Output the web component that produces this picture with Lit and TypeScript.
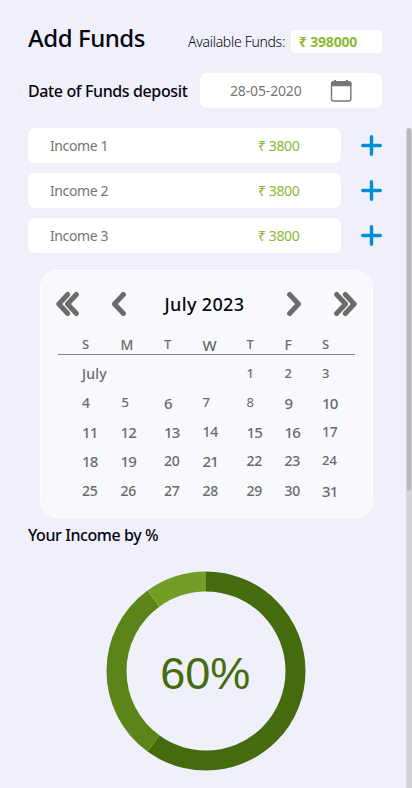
import { LitElement, html, css, svg } from "lit";
import { customElement } from "lit/decorators.js";

type Cell = [text: string, size?: string];

const WEEKDAYS: Cell[] = [["S", "s"], ["M"], ["T", "s"], ["W", "l"], ["T", "s"], ["F"], ["S", "s"]];
const WEEKS: Cell[][] = [
  [["July", "word"], [""], [""], [""], ["1", "s"], ["2", "s"], ["3", "s"]],
  [["4"], ["5", "s in"], ["6", "l"], ["7", "s"], ["8", "s thin"], ["9", "l"], ["10", "l"]],
  [["11", "l"], ["12", "l"], ["13", "l"], ["14"], ["15", "l"], ["16", "l"], ["17"]],
  [["18", "l"], ["19", "l"], ["20"], ["21", "l"], ["22"], ["23"], ["24", "s wide"]],
  [["25"], ["26"], ["27"], ["28"], ["29"], ["30"], ["31", "l"]],
];

const SHARES = [
  { value: 60, color: "#446c0e" },
  { value: 30, color: "#5b8519" },
  { value: 10, color: "#729e28" },
];

@customElement("fund-calendar")
export class FundCalendar extends LitElement {
  static styles = css`
    :host { display: block; box-sizing: border-box; width: 333px; height: 248px; margin-left: 12px;
      border: 1px solid #fff; border-radius: 18px; background: #f8f8fd; color: #6b6b6b; }
    .nav { display: flex; align-items: center; height: 26px; margin: 20px 15px 0; }
    .nav svg { display: block; fill: none; stroke: #6b6b6b; stroke-width: 5; stroke-linecap: round; stroke-linejoin: round; }
    .prev { margin-left: 32px; }
    .title { flex: 1; padding-left: 38.5px; color: #050510; font-size: 18px; line-height: 26px; font-weight: 550; white-space: nowrap; letter-spacing: 0.35px; }
    .next { margin-right: 32px; }
    .row { display: grid; grid-template-columns: 38.5px 43.5px 38.5px 44px 38px 37.5px 30px; align-items: start;
      height: 29.3px; padding-left: 41px; font-size: 14px; line-height: 1; font-weight: 550; }
    .row span { line-height: 1; letter-spacing: -0.2px; }
    .head { height: 16.5px; margin: 20.5px 17px 0 17px; padding-left: 24px; border-bottom: 1.5px solid #858585; }
    .weeks { padding-top: 11.5px; }
    .row .s { font-size: 13px; }
    .row .l { font-size: 15px; letter-spacing: -0.9px; }
    .row .in { padding-left: 1px; }
    .row .wide { letter-spacing: 0; }
    .row .word { font-size: 14px; letter-spacing: 0.25px; }
    .row .thin { font-weight: 400; }
  `;
  private cells(row: Cell[]) {
    return row.map(([text, size]) => html`<span class=${size ?? ""}>${text}</span>`);
  }
  render() {
    return html`
      <div class="nav">
        <svg width="24" height="26" viewBox="0 0 24 26"><path d="M11.7 3.5 2.8 13 11.7 22.5M20.4 3.5 11.5 13 20.4 22.5" /></svg>
        <svg class="prev" width="14" height="26" viewBox="0 0 14 26"><path d="M11.4 3.5 2.5 13 11.4 22.5" /></svg>
        <div class="title">July 2023</div>
        <svg class="next" width="14" height="26" viewBox="0 0 14 26"><path d="M2.6 3.5 11.5 13 2.6 22.5" /></svg>
        <svg width="24" height="26" viewBox="0 0 24 26"><path d="M3.6 3.5 12.5 13 3.6 22.5M12.3 3.5 21.2 13 12.3 22.5" /></svg>
      </div>
      <div class="row head">${this.cells(WEEKDAYS)}</div>
      <div class="weeks">${WEEKS.map((w) => html`<div class="row">${this.cells(w)}</div>`)}</div>
    `;
  }
}

@customElement("income-donut")
export class IncomeDonut extends LitElement {
  static styles = css`
    :host { display: block; width: 200px; height: 200px; margin-left: 78px; }
    svg { display: block; }
    circle { fill: none; stroke-width: 20; }
    text { font: 45px "Liberation Sans", Arial, sans-serif; fill: #446c0e; text-anchor: middle; }
  `;
  render() {
    let start = 0;
    const arcs = SHARES.map((s) => {
      const arc = svg`<circle cx="100" cy="100" r="89.5" pathLength="100" stroke=${s.color}
        stroke-dasharray="${s.value} ${100 - s.value}" stroke-dashoffset=${-start} transform="rotate(-90 100 100)" />`;
      start += s.value;
      return arc;
    });
    return html`<svg width="200" height="200" viewBox="0 0 200 200">${arcs}<text x="99.3" y="118">60%</text></svg>`;
  }
}

@customElement("app-root")
export class AppRoot extends LitElement {
  static styles = css`
    :host { display: block; position: relative; box-sizing: border-box; width: 412px; height: 788px; padding: 0 30px 0 28px; overflow: hidden;
      background: #f0f0fa; color: #050510; font-family: "Noto Sans", "Open Sans", sans-serif; }
    .top { display: flex; align-items: center; justify-content: space-between; height: 35px; padding-top: 24px; white-space: nowrap; }
    h1 { margin: -8px 0 0; font-size: 24px; line-height: 35px; font-weight: 500; letter-spacing: -0.45px; }
    .funds { display: flex; align-items: center; font-size: 14px; font-weight: 350; letter-spacing: -0.3px; }
    .total { box-sizing: border-box; width: 91px; height: 23px; margin-left: 6px; padding-left: 8px; border-radius: 4px; background: #fff;
      color: #8aba35; font-size: 14px; line-height: 24px; font-weight: 700; letter-spacing: -0.2px; }
    .date { display: flex; align-items: center; justify-content: space-between; height: 35px; margin-top: 14px; white-space: nowrap; }
    .label { padding-top: 1px; font-size: 16px; line-height: 24px; font-weight: 500; letter-spacing: -0.38px; }
    .picker { box-sizing: border-box; display: flex; align-items: center; justify-content: space-between; width: 182px; height: 35px; padding: 0 30px 0 30px;
      border-radius: 7px; background: #fff; color: #757575; font-size: 14px; letter-spacing: -0.15px; }
    .incomes { display: grid; gap: 10px; margin-top: 20px; }
    .income { display: flex; align-items: center; justify-content: space-between; height: 35px; }
    .field { box-sizing: border-box; display: flex; width: 313px; height: 35px; padding: 0 22px; border-radius: 7px; background: #fff;
      color: #757575; font-size: 14px; line-height: 36px; letter-spacing: -0.4px; }
    .name { width: 208px; }
    .amount { color: #8aba35; letter-spacing: -0.4px; }
    .icon { display: block; }
    fund-calendar { margin-top: 17px; }
    .share { box-sizing: border-box; height: 24px; margin-top: 4px; letter-spacing: -0.42px; }
    income-donut { margin-top: 25px; }
    .track { position: absolute; right: 0; top: 128px; width: 6px; height: 660px; border-radius: 3px 3px 0 0; background: #d3d3d3; }
    .thumb { width: 4px; height: 363px; margin-left: 1px; border-radius: 2px; background: #b9b9b9; }
  `;
  render() {
    return html`
      <div class="top">
        <h1>Add Funds</h1>
        <div class="funds">Available Funds:<div class="total">₹ 398000</div></div>
      </div>
      <div class="date">
        <div class="label">Date of Funds deposit</div>
        <div class="picker">28-05-2020
          <svg class="icon" width="22" height="22" viewBox="0 0 22 22">
            <rect x="1.5" y="2" width="19.3" height="19" rx="2" fill="none" stroke="#757575" stroke-width="1.4" />
            <path d="M1 3q0-1.700 2-1.700H4V0h2v1.300h10V0h2v1.300h1.500q2 0 2 1.700v3.200H1z" fill="#757575" />
          </svg>
        </div>
      </div>
      <div class="incomes">
        ${[1, 2, 3].map((n) => html`
          <div class="income">
            <div class="field"><span class="name">Income ${n}</span><span class="amount">₹ 3800</span></div>
            <svg class="icon" width="21" height="21" viewBox="0 0 21 21"><path d="M10.500 1.700v17.600M1.700 10.500h17.600" stroke="#0090d8" stroke-width="3.400" stroke-linecap="round" /></svg>
          </div>`)}
      </div>
      <fund-calendar></fund-calendar>
      <div class="label share">Your Income by %</div>
      <income-donut></income-donut>
      <div class="track"><div class="thumb"></div></div>
    `;
  }
}
